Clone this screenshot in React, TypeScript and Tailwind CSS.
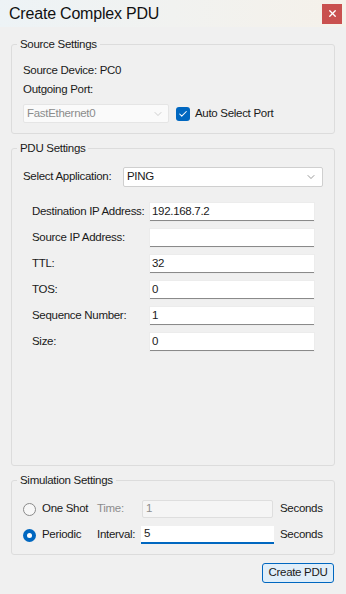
import { Check, ChevronDown, X } from "lucide-react";

const fields = [
  { label: "Destination IP Address:", value: "192.168.7.2" },
  { label: "Source IP Address:", value: "" },
  { label: "TTL:", value: "32" },
  { label: "TOS:", value: "0" },
  { label: "Sequence Number:", value: "1" },
  { label: "Size:", value: "0" },
];

function Group(props: { title: string; className?: string; children: React.ReactNode }) {
  return (
    <fieldset className={"mx-[11px] rounded-[3px] border border-[#dcdcdc] " + (props.className ?? "")}>
      <legend className="-ml-[6px] px-[3px] leading-[15px] text-[#1a1a1a]">{props.title}</legend>
      {props.children}
    </fieldset>
  );
}

export default function App() {
  return (
    <div
      className="flex h-[594px] w-[346px] flex-col bg-[#f0f0f0] text-[11.5px] tracking-[-0.3px] text-[#1a1a1a]"
      style={{ fontFamily: '"Liberation Sans", Arial, sans-serif' }}
    >
      <div className="flex h-[27px] items-center justify-between bg-gradient-to-r from-[#edf3f6] to-[#f5f1ea] pl-[9px] pr-[4px]">
        <span className="text-[16px] leading-[20px] tracking-[-0.2px] text-[#111]">Create Complex PDU</span>
        <button className="flex h-[20px] w-[20px] items-center justify-center bg-[#c9504f] text-white">
          <X size={11} strokeWidth={3} />
        </button>
      </div>

      <Group title="Source Settings" className="mt-[10px] px-[11px] pb-[10px] pt-[11px]">
        <div className="leading-[15px]">Source Device: PC0</div>
        <div className="mt-[4px] leading-[15px]">Outgoing Port:</div>
        <div className="mt-[7px] flex items-center">
          <div className="flex h-[19px] w-[146px] items-center justify-between rounded-[2px] border border-[#e5e5e5] bg-[#fafafa] pl-[3px] pr-[4px] text-[#8c8c8c]">
            <span>FastEthernet0</span>
            <ChevronDown size={12} strokeWidth={1.2} className="text-[#b0b0b0]" />
          </div>
          <div className="ml-[7px] flex h-[14px] w-[14px] items-center justify-center rounded-[3px] bg-[#0067c0] text-white">
            <Check size={10} strokeWidth={2.5} />
          </div>
          <span className="ml-[5px]">Auto Select Port</span>
        </div>
      </Group>

      <Group title="PDU Settings" className="mt-[7px] flex-1 px-[11px] pt-[11px]">
        <div className="flex items-center">
          <span className="w-[100px] whitespace-nowrap">Select Application:</span>
          <div className="flex h-[20px] w-[200px] items-center justify-between rounded-[2px] border border-[#cfcfcf] bg-white pl-[3px] pr-[5px]">
            <span>PING</span>
            <ChevronDown size={12} strokeWidth={1.2} className="text-[#555]" />
          </div>
        </div>
        <div className="mt-[16px] flex flex-col gap-[8px] pl-[9px]">
          {fields.map((f) => (
            <div key={f.label} className="flex items-center">
              <span className="w-[118px] whitespace-nowrap">{f.label}</span>
              <div className="flex h-[18px] w-[164px] items-center border-b border-b-[#8a8a8a] bg-white pl-[2px] shadow-[0_0_0_1px_#ececec]">
                {f.value}
              </div>
            </div>
          ))}
        </div>
      </Group>

      <Group title="Simulation Settings" className="mt-[7px] px-[11px] pb-[10px] pt-[12px]">
        <div className="flex items-center">
          <div className="h-[13px] w-[13px] rounded-full border border-[#8a8a8a] bg-[#f7f7f7]" />
          <span className="ml-[6px] w-[55px] whitespace-nowrap">One Shot</span>
          <span className="w-[45px] text-[#8c8c8c]">Time:</span>
          <div className="flex h-[18px] w-[131px] items-center rounded-[2px] border border-[#dedede] bg-[#f5f5f5] pl-[3px] text-[#8c8c8c]">1</div>
          <span className="ml-[7px]">Seconds</span>
        </div>
        <div className="mt-[8px] flex items-center">
          <div className="flex h-[13px] w-[13px] items-center justify-center rounded-full bg-[#0067c0]">
            <div className="h-[5px] w-[5px] rounded-full bg-white" />
          </div>
          <span className="ml-[6px] w-[55px]">Periodic</span>
          <span className="w-[44px] whitespace-nowrap">Interval:</span>
          <div className="flex h-[18px] w-[133px] items-center border-b-2 border-b-[#0067c0] bg-white pl-[3px]">5</div>
          <span className="ml-[6px]">Seconds</span>
        </div>
      </Group>

      <div className="flex justify-end px-[12px] pb-[11px] pt-[8px]">
        <button className="h-[20px] w-[72px] whitespace-nowrap rounded-[3px] border border-[#0067c0] bg-[#e0eef9] leading-none">
          Create PDU
        </button>
      </div>
    </div>
  );
}
